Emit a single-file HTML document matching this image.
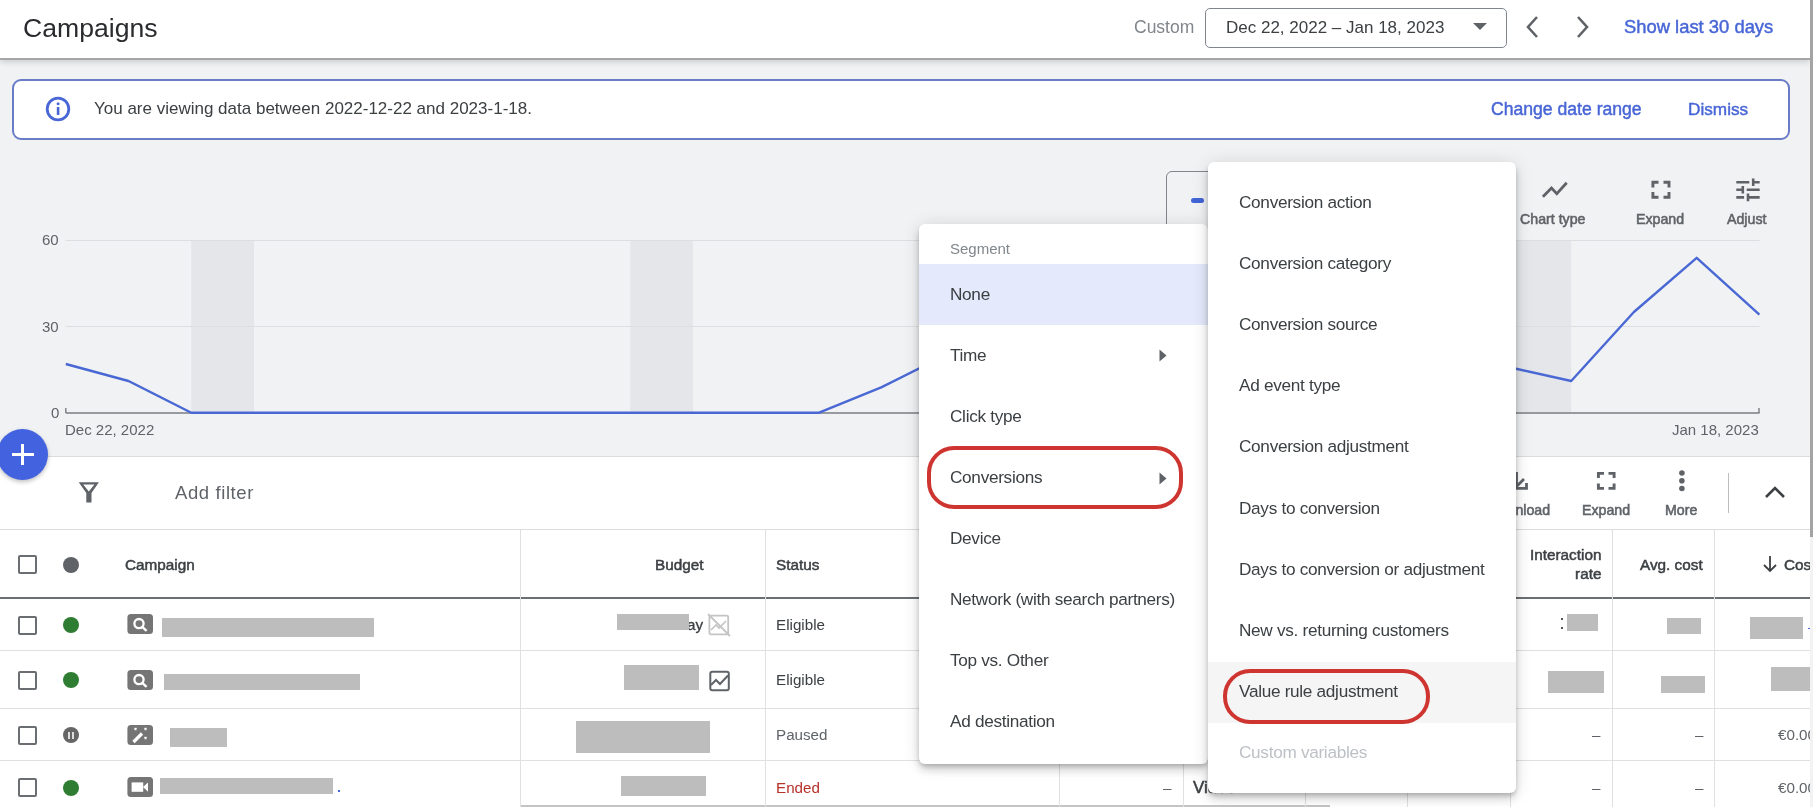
<!DOCTYPE html>
<html><head><meta charset="utf-8">
<style>
*{box-sizing:border-box;margin:0;padding:0}
html,body{width:1813px;height:807px;overflow:hidden}
.a,.mi span{will-change:transform}
body{position:relative;background:#f0f2f4;font-family:"Liberation Sans",sans-serif;color:#3c4043}
.a{position:absolute;white-space:nowrap}
#hdr{left:0;top:0;width:1810px;height:60px;background:#fff;border-bottom:2px solid #a6a6a6;box-shadow:0 2px 6px rgba(0,0,0,.16)}
#sb{left:1810px;top:0;width:3px;height:807px;background:#f2f2f2}
#sbt{left:1810px;top:0;width:3px;height:537px;background:#a4a4a4}
.blue{color:#4866d6;font-weight:normal!important;-webkit-text-stroke:0.45px #4866d6}
#banner{left:12px;top:79px;width:1778px;height:61px;background:#fff;border:2px solid #6a7cc8;border-radius:9px}
#tb{left:0;top:456px;width:1810px;height:74px;background:#fff;border-top:1px solid #dadce0;border-bottom:1px solid #dadce0}
#tbl{left:0;top:530px;width:1810px;height:277px;background:#fff}
.menu{background:#fff;border-radius:6px;box-shadow:0 3px 5px -1px rgba(0,0,0,.2),0 6px 10px 0 rgba(0,0,0,.14),0 1px 18px 0 rgba(0,0,0,.12)}
.mi{position:absolute;left:0;width:100%;height:61px;font-size:17.2px;letter-spacing:-0.3px;color:#3c4043;white-space:nowrap}
.mi span{position:absolute;left:31px;top:calc(50% - 0.1px);transform:translateY(-50%)}
.sub .mi span{top:calc(50% - 0.8px)}
.hl1{background:#e4e9fb}
.hl2{background:#f5f5f5}
.oval{position:absolute;border:4px solid #cf3530;border-radius:27px}
.tl{font-size:14.2px;color:#5f6368;-webkit-text-stroke:0.55px #5f6368}
.lbl{font-size:15px;color:#5f6368}
.th{font-size:15.3px;color:#3c4043;-webkit-text-stroke:0.5px #3c4043}
.td{font-size:15.2px;color:#3c4043}
.red{background:#bdbdbd}
.cb{position:absolute;left:17.5px;width:19px;height:19px;border:2px solid #6a6e73;border-radius:2px;background:#fff}
.dot{position:absolute;left:63px;width:16px;height:16px;border-radius:50%;background:#2e7d32}
.ico{position:absolute;left:127px;width:25.5px;height:20px;border-radius:3px;background:#757575}
.vl{position:absolute;width:1px;background:#e0e0e0}
.hlr{position:absolute;left:0;width:1810px;height:1px;background:#e0e0e0}
</style></head><body>

<!-- header -->
<div id="hdr" class="a"></div>
<div class="a" style="left:22.5px;top:12.5px;font-size:26.6px;color:#2a2b2e">Campaigns</div>
<div class="a" style="left:1134px;top:17px;font-size:17.5px;color:#80868b">Custom</div>
<div class="a" style="left:1204.5px;top:7.5px;width:302px;height:40px;border:1px solid #80868b;border-radius:5px;background:#fff"></div>
<div class="a" style="left:1226px;top:17.5px;font-size:17px;color:#3c4043">Dec 22, 2022 – Jan 18, 2023</div>
<svg class="a" style="left:1472px;top:22px" width="16" height="9"><path d="M1 1 L15 1 L8 8 Z" fill="#5f6368"/></svg>
<svg class="a" style="left:1522px;top:14px" width="20" height="26"><path d="M15 3 L6 13 L15 23" fill="none" stroke="#5f6368" stroke-width="2.6"/></svg>
<svg class="a" style="left:1573px;top:14px" width="20" height="26"><path d="M5 3 L14 13 L5 23" fill="none" stroke="#5f6368" stroke-width="2.6"/></svg>
<div class="a blue" style="left:1624px;top:16px;font-size:18.4px">Show last 30 days</div>



<!-- banner -->
<div id="banner" class="a"></div>
<svg class="a" style="left:45px;top:96px" width="26" height="26"><circle cx="13" cy="13" r="10.8" fill="none" stroke="#4866d6" stroke-width="2.8"/><rect x="11.8" y="11" width="2.6" height="8" fill="#4866d6"/><circle cx="13.1" cy="7.8" r="1.5" fill="#4866d6"/></svg>
<div class="a" style="left:94px;top:99px;font-size:17px;color:#3c4043">You are viewing data between 2022-12-22 and 2023-1-18.</div>
<div class="a blue" style="left:1491px;top:98.5px;font-size:17.6px">Change date range</div>
<div class="a blue" style="left:1688px;top:98.5px;font-size:17.2px">Dismiss</div>

<!-- chart -->
<svg class="a" style="left:0;top:0" width="1813" height="460">
<rect x="191.3" y="240.5" width="62.7" height="172" fill="#e4e6ea"/><rect x="630.3" y="240.5" width="62.7" height="172" fill="#e4e6ea"/><rect x="1069.4" y="240.5" width="62.7" height="172" fill="#e4e6ea"/><rect x="1508.5" y="240.5" width="62.7" height="172" fill="#e4e6ea"/>
<line x1="65.8" y1="240.5" x2="1759.5" y2="240.5" stroke="#dcdee2" stroke-width="1.2"/>
<line x1="65.8" y1="326.5" x2="1759.5" y2="326.5" stroke="#dcdee2" stroke-width="1.2"/>
<line x1="65.8" y1="413" x2="1759.5" y2="413" stroke="#7a7d82" stroke-width="1.6"/>
<line x1="65.8" y1="408" x2="65.8" y2="413" stroke="#7a7d82" stroke-width="1.4"/>
<line x1="1759" y1="408" x2="1759" y2="413" stroke="#7a7d82" stroke-width="1.4"/>
<polyline fill="none" stroke="#4a68d4" stroke-width="2.4" stroke-linejoin="round" points="65.8,364.0 128.5,381.0 191.3,412.8 254.0,412.8 316.7,412.8 379.4,412.8 442.2,412.8 504.9,412.8 567.6,412.8 630.3,412.8 693.1,412.8 755.8,412.8 818.5,412.8 881.2,387.4 944.0,356.0 1006.7,340.0 1069.4,330.0 1132.1,350.0 1194.9,345.0 1257.6,360.0 1320.3,362.0 1383.0,358.0 1445.8,360.0 1508.5,367.0 1571.2,381.0 1633.9,312.0 1696.7,257.8 1759.4,314.6"/>
</svg>
<div class="a lbl" style="right:1754px;top:231px">60</div>
<div class="a lbl" style="right:1754px;top:318px">30</div>
<div class="a lbl" style="right:1754px;top:404px">0</div>
<div class="a lbl" style="left:65px;top:421px">Dec 22, 2022</div>
<div class="a lbl" style="right:54px;top:421px">Jan 18, 2023</div>

<!-- chart toolbar -->
<div class="a" style="left:1166px;top:171px;width:120px;height:70px;border:1px solid #80868b;border-radius:6px;background:#f0f2f4"></div>
<div class="a" style="left:1191px;top:197.5px;width:13px;height:5px;border-radius:3px;background:#4264d6"></div>
<div class="a tl" style="left:1520px;top:211px">Chart type</div>
<div class="a tl" style="left:1636px;top:211px">Expand</div>
<div class="a tl" style="left:1727px;top:211px">Adjust</div>

<!-- table toolbar -->
<div id="tb" class="a"></div>
<svg class="a" style="left:70px;top:475px" width="40" height="35"><path fill-rule="evenodd" fill="#5f6368" d="M8.7 7.2 H28.9 L21.5 18 V27.5 H16.3 V18 Z M13.2 9.5 H24.4 L18.8 16.6 Z"/></svg>
<div class="a" style="left:175px;top:482px;font-size:18.5px;letter-spacing:0.6px;color:#5f6368">Add filter</div>
<div class="a tl" style="left:1487px;top:501.5px">Download</div>
<div class="a tl" style="left:1582px;top:501.5px">Expand</div>
<div class="a tl" style="left:1665px;top:501.5px">More</div>
<div class="a" style="left:1728px;top:473px;width:1.2px;height:40px;background:#bdbdbd"></div>
<svg class="a" style="left:1763px;top:484px" width="24" height="16"><path d="M3 13 L12 4 L21 13" fill="none" stroke="#3c4043" stroke-width="2.6"/></svg>

<!-- table -->
<div id="tbl" class="a"></div>
<div class="a" style="left:0;top:597px;width:1810px;height:2px;background:#6b6e72"></div>
<div class="hlr" style="top:650px"></div>
<div class="hlr" style="top:708px"></div>
<div class="hlr" style="top:760px"></div>
<div class="a" style="left:520px;top:805px;width:810px;height:2px;background:#c4c4c4"></div>
<div class="vl" style="left:520px;top:530px;height:277px"></div>
<div class="vl" style="left:765px;top:530px;height:277px"></div>
<div class="vl" style="left:1059px;top:530px;height:277px"></div>
<div class="vl" style="left:1183px;top:530px;height:277px"></div>
<div class="vl" style="left:1305px;top:530px;height:277px"></div>
<div class="vl" style="left:1407px;top:530px;height:277px"></div>
<div class="vl" style="left:1510px;top:530px;height:277px"></div>
<div class="vl" style="left:1612px;top:530px;height:277px"></div>
<div class="vl" style="left:1714px;top:530px;height:277px"></div>

<div class="cb" style="top:554.5px"></div>
<div class="dot" style="top:556.5px;background:#5f6368"></div>
<div class="a th" style="left:124.5px;top:556px">Campaign</div>
<div class="a th" style="right:1110px;top:556px">Budget</div>
<div class="a th" style="left:776px;top:556px">Status</div>
<div class="a th" style="right:212px;top:545px;text-align:right;line-height:19px">Interaction<br>rate</div>
<div class="a th" style="right:110px;top:556px">Avg. cost</div>
<svg class="a" style="left:1761px;top:554px" width="18" height="20"><path d="M9 2 V17 M3 11 L9 17 L15 11" fill="none" stroke="#3c4043" stroke-width="1.8"/></svg>
<div class="a th" style="left:1784px;top:556px">Cost</div>

<!-- rows -->
<div class="cb" style="top:615.5px"></div><div class="dot" style="top:617px"></div>
<svg class="a" style="left:127px;top:614px" width="26" height="21"><rect x="0.4" y="0" width="25.6" height="20" rx="3.5" fill="#757575"/><circle cx="12" cy="9.6" r="4.6" fill="none" stroke="#fff" stroke-width="2.3"/><path d="M15.2 12.8 L19.6 16.8" stroke="#fff" stroke-width="2.4"/></svg>
<div class="a red" style="left:162px;top:617.5px;width:212px;height:19px"></div>
<div class="a td" style="left:687px;top:616px;-webkit-text-stroke:0.3px #3c4043">ay</div><div class="a red" style="left:617px;top:614px;width:72px;height:15.5px"></div>
<div class="a td" style="left:776px;top:616px">Eligible</div>

<svg class="a" style="left:706px;top:612px" width="26" height="26"><rect x="3.4" y="3.6" width="18.8" height="18.8" rx="1.5" fill="none" stroke="#c4c4c4" stroke-width="1.8"/><path d="M5 18 L10 13 L13 16 L20 9" fill="none" stroke="#c4c4c4" stroke-width="1.6"/><path d="M2 2 L24 24" stroke="#c4c4c4" stroke-width="1.8"/></svg>

<div class="cb" style="top:670.5px"></div><div class="dot" style="top:672px"></div>
<svg class="a" style="left:127px;top:670px" width="26" height="21"><rect x="0.4" y="0" width="25.6" height="20" rx="3.5" fill="#757575"/><circle cx="12" cy="9.6" r="4.6" fill="none" stroke="#fff" stroke-width="2.3"/><path d="M15.2 12.8 L19.6 16.8" stroke="#fff" stroke-width="2.4"/></svg>
<div class="a red" style="left:164px;top:674px;width:196px;height:15.5px"></div>
<div class="a red" style="left:624px;top:664.5px;width:74.5px;height:24.5px"></div>
<div class="a td" style="left:776px;top:671px">Eligible</div>
<svg class="a" style="left:706px;top:668px" width="26" height="26"><rect x="4.3" y="3.8" width="18.5" height="18.5" rx="2" fill="none" stroke="#5f6368" stroke-width="2"/><path d="M5 17 L10 12 L14 16 L22 7.5" fill="none" stroke="#5f6368" stroke-width="2"/></svg>

<div class="cb" style="top:725.5px"></div><div class="dot" style="top:727.2px;background:#666"></div><div class="a" style="left:68px;top:732px;width:1.8px;height:6.6px;background:#ddd"></div><div class="a" style="left:71.7px;top:732px;width:1.8px;height:6.6px;background:#ddd"></div>
<svg class="a" style="left:127px;top:725px" width="26" height="21"><rect x="0.4" y="0" width="25.6" height="20" rx="3.5" fill="#757575"/><path d="M6.5 17 L15 8.5" stroke="#fff" stroke-width="3.2"/><path d="M7.5 3 l2 2 m0 -2 l-2 2 M17.5 3 l2 2 m0 -2 l-2 2 M17.5 12 l2 2 m0 -2 l-2 2" stroke="#fff" stroke-width="1.3"/></svg>
<div class="a red" style="left:170px;top:728px;width:57px;height:18.5px"></div>
<div class="a red" style="left:576px;top:720.5px;width:134px;height:31.5px"></div>
<div class="a td" style="left:776px;top:726px;color:#5f6368">Paused</div>
<div class="a td" style="right:212.5px;top:726px;color:#5f6368">–</div>
<div class="a td" style="right:110px;top:726px;color:#5f6368">–</div>
<div class="a td" style="left:1778px;top:726px;color:#5f6368">€0.00</div>

<div class="cb" style="top:778px"></div><div class="dot" style="top:779.5px"></div>
<svg class="a" style="left:127px;top:777px" width="26" height="21"><rect x="0.4" y="0" width="25.6" height="20" rx="3.5" fill="#757575"/><rect x="4.6" y="5.4" width="11.6" height="9.4" fill="#fff"/><path d="M16 10 L21 5.4 V14.8 Z" fill="#fff"/></svg>
<div class="a red" style="left:160px;top:777.5px;width:173px;height:16px"></div><div class="a" style="left:338px;top:790px;width:1.5px;height:1.5px;background:#4866d6"></div>
<div class="a red" style="left:621px;top:775.5px;width:85px;height:19.5px"></div>
<div class="a td" style="left:776px;top:779px;color:#b8312b">Ended</div>
<div class="a td" style="right:642px;top:779px;color:#5f6368">–</div>
<div class="a td" style="left:1193px;top:777.5px;font-size:17px;-webkit-text-stroke:0.5px #3c4043">Video</div>
<div class="a td" style="right:212.5px;top:779px;color:#5f6368">–</div>
<div class="a td" style="right:110px;top:779px;color:#5f6368">–</div>
<div class="a td" style="left:1778px;top:779px;color:#5f6368">€0.00</div>

<div class="a red" style="left:1567px;top:614px;width:31px;height:17px"></div><div class="a" style="left:1561px;top:618px;width:1.5px;height:2px;background:#555"></div><div class="a" style="left:1561px;top:627px;width:1.5px;height:2px;background:#555"></div><div class="a" style="left:1808px;top:615px;width:3px;height:14px;border-bottom:1.5px solid #4866d6"></div>
<div class="a red" style="left:1667px;top:618px;width:34px;height:16px"></div>
<div class="a red" style="left:1750px;top:617px;width:53px;height:22px"></div>
<div class="a red" style="left:1548px;top:670.5px;width:56px;height:21.5px"></div>
<div class="a red" style="left:1660.5px;top:675.5px;width:44px;height:16.5px"></div>
<div class="a red" style="left:1771px;top:667px;width:39px;height:24px"></div>

<svg class="a" style="left:0;top:0" width="1813" height="807">
<path d="M1542.9 196.8 L1551.5 188.1 L1556.8 193.6 L1566.7 182.7" fill="none" stroke="#5f6368" stroke-width="2.8"/>
<path d="M1652.9 187.5 V182.2 H1658.5 M1663.5 182.2 H1669 V187.5 M1669 192 V197.2 H1663.5 M1658.5 197.2 H1652.9 V192" fill="none" stroke="#5f6368" stroke-width="2.9"/>
<g transform="translate(1732.4 174.7) scale(1.3 1.26)"><path fill="#5f6368" d="M3 17v2h6v-2H3zM3 5v2h10V5H3zm10 16v-2h8v-2h-8v-2h-2v6h2zM7 9v2H3v2h4v2h2V9H7zm14 4v-2H11v2h10zm-6-4h2V7h4V5h-4V3h-2v6z"/></g>
<path d="M1516.5 472 V486 M1509 479 L1516.5 486.5 L1524 479 M1509 488.4 H1526.5 V483" fill="none" stroke="#5f6368" stroke-width="2.8"/>
<path d="M1598.4 478 V473.4 H1604 M1608.5 473.4 H1614.1 V478 M1614.1 483.5 V488.4 H1608.5 M1604 488.4 H1598.4 V483.5" fill="none" stroke="#5f6368" stroke-width="2.9"/>
<circle cx="1681.9" cy="473" r="2.8" fill="#5f6368"/><circle cx="1681.9" cy="480.8" r="2.8" fill="#5f6368"/><circle cx="1681.9" cy="488.5" r="2.8" fill="#5f6368"/>
</svg>
<!-- FAB -->
<div class="a" style="left:-3px;top:429px;width:51px;height:51px;border-radius:50%;background:#4262e0;box-shadow:0 2px 4px rgba(0,0,0,.25)"></div>
<div class="a" style="left:12px;top:453px;width:22px;height:3px;background:#fff"></div>
<div class="a" style="left:21px;top:444px;width:3px;height:21px;background:#fff"></div>

<!-- segment menu -->
<div class="a menu" style="left:919px;top:223.5px;width:289px;height:540px">
  <div class="a" style="left:31px;top:16px;font-size:15px;color:#80868b">Segment</div>
  <div class="mi hl1" style="top:40px"><span>None</span></div>
  <div class="mi" style="top:101px"><span>Time</span></div>
  <div class="mi" style="top:162px"><span>Click type</span></div>
  <div class="mi" style="top:223px"><span>Conversions</span></div>
  <div class="mi" style="top:284px"><span>Device</span></div>
  <div class="mi" style="top:345px"><span>Network (with search partners)</span></div>
  <div class="mi" style="top:406px"><span>Top vs. Other</span></div>
  <div class="mi" style="top:467px"><span>Ad destination</span></div>
  <svg class="a" style="left:240px;top:125px" width="8" height="13"><path d="M0.5 0.5 L7.5 6.5 L0.5 12.5 Z" fill="#5f6368"/></svg>
  <svg class="a" style="left:240px;top:248px" width="8" height="13"><path d="M0.5 0.5 L7.5 6.5 L0.5 12.5 Z" fill="#5f6368"/></svg>
</div>
<div class="oval" style="left:927px;top:446px;width:256px;height:63px"></div>

<!-- conversions submenu -->
<div class="a menu sub" style="left:1208px;top:162px;width:308px;height:631px">
  <div class="mi" style="top:10px"><span>Conversion action</span></div>
  <div class="mi" style="top:71.2px"><span>Conversion category</span></div>
  <div class="mi" style="top:132.4px"><span>Conversion source</span></div>
  <div class="mi" style="top:193.6px"><span>Ad event type</span></div>
  <div class="mi" style="top:254.8px"><span>Conversion adjustment</span></div>
  <div class="mi" style="top:316px"><span>Days to conversion</span></div>
  <div class="mi" style="top:377.2px"><span>Days to conversion or adjustment</span></div>
  <div class="mi" style="top:438.4px"><span>New vs. returning customers</span></div>
  <div class="mi hl2" style="top:499.6px"><span>Value rule adjustment</span></div>
  <div class="mi" style="top:560.8px;color:#bdc1c6"><span>Custom variables</span></div>
</div>
<div class="oval" style="left:1222.5px;top:668.5px;width:207px;height:55px"></div>

<div id="sb" class="a"></div><div id="sbt" class="a"></div>
</body></html>
